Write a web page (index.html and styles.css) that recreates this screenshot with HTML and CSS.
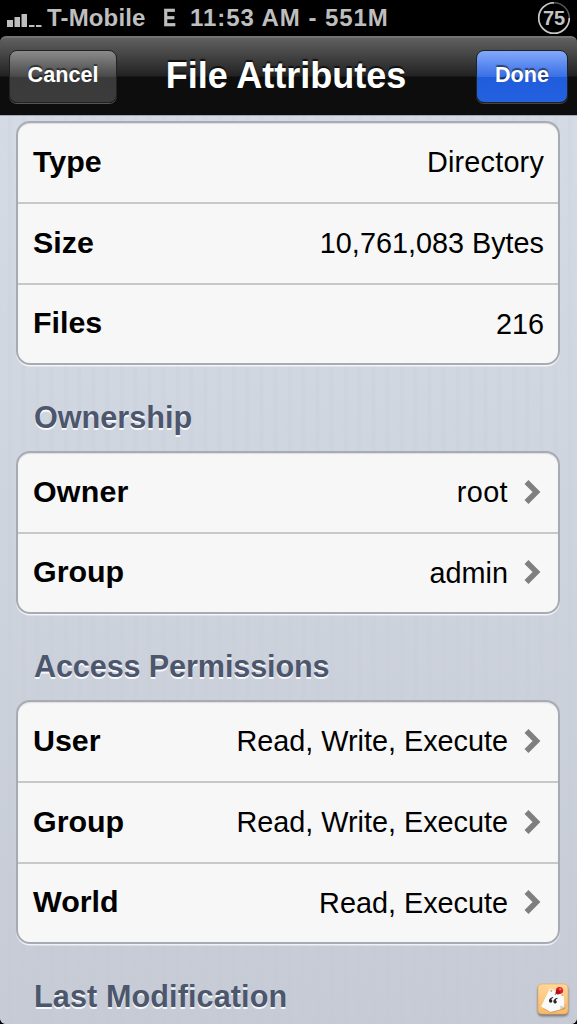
FILE: index.html
```
<!DOCTYPE html>
<html lang="en">
<head>
<meta charset="utf-8">
<title>File Attributes</title>
<link rel="stylesheet" href="styles.css">
</head>
<body>
<div class="screen">
  <div class="status">
    <svg class="signal" width="36" height="13" viewBox="0 0 36 13"><path fill="#bebebe" d="M0 6h6v7H0zM7.500 3h5.500v10H7.500zM14.500 0h5.500v13h-5.500zM22 11h5.500v2H22zM29 11h5.500v2H29z"/></svg>
    <span class="carrier">T-Mobile</span>
    <span class="network">E</span>
    <span class="time">11:53 AM - 551M</span>
    <svg class="battery" width="34" height="34" viewBox="0 0 34 34"><circle cx="17" cy="17" r="15.300" fill="none" stroke="#555" stroke-width="1.500"/><path d="M32.300 17A15.300 15.300 0 1 1 17 1.700" fill="none" stroke="#c8c8c8" stroke-width="1.600"/><text class="level" x="17" y="24" text-anchor="middle">75</text></svg>
  </div>
  <header class="navbar">
    <button class="btn cancel">Cancel</button>
    <h1 class="title">File Attributes</h1>
    <button class="btn done">Done</button>
  </header>
  <main class="content">
    <section class="group">
      <div class="row"><span class="label">Type</span><span class="value directory">Directory</span></div>
      <div class="row"><span class="label">Size</span><span class="value">10,761,083 Bytes</span></div>
      <div class="row"><span class="label">Files</span><span class="value">216</span></div>
    </section>
    <h2 class="heading">Ownership</h2>
    <section class="group">
      <div class="row"><span class="label wide">Owner</span><span class="value root">root</span><svg class="chevron" width="17" height="26" viewBox="0 0 17 26"><path d="M2.500 3l10 10-10 10"/></svg></div>
      <div class="row"><span class="label">Group</span><span class="value">admin</span><svg class="chevron" width="17" height="26" viewBox="0 0 17 26"><path d="M2.500 3l10 10-10 10"/></svg></div>
    </section>
    <h2 class="heading access">Access Permissions</h2>
    <section class="group">
      <div class="row"><span class="label">User</span><span class="value">Read, Write, Execute</span><svg class="chevron" width="17" height="26" viewBox="0 0 17 26"><path d="M2.500 3l10 10-10 10"/></svg></div>
      <div class="row"><span class="label">Group</span><span class="value">Read, Write, Execute</span><svg class="chevron" width="17" height="26" viewBox="0 0 17 26"><path d="M2.500 3l10 10-10 10"/></svg></div>
      <div class="row"><span class="label">World</span><span class="value">Read, Execute</span><svg class="chevron" width="17" height="26" viewBox="0 0 17 26"><path d="M2.500 3l10 10-10 10"/></svg></div>
    </section>
    <h2 class="heading last">Last Modification</h2>
  </main>
  <svg class="note" width="36" height="36" viewBox="0 0 36 36">
    <defs><linearGradient id="amber" x2="0" y2="1"><stop stop-color="#ffd79b"/><stop offset="1" stop-color="#f8b968"/></linearGradient></defs>
    <rect x="3" y="3" width="30" height="30" rx="4" fill="url(#amber)" stroke="#e9ac62" stroke-width=".7"/>
    <path d="M8 27.500l8 4.500 14-4 .500-5z" fill="#a97336" opacity=".45"/>
    <path d="M15 7.500L28.500 13 29.500 26 25 28.500 15.500 31 6 25.500z" fill="#fafafa"/>
    <path d="M25 28.500l.500-4 4 1.500z" fill="#d0d0d0"/>
    <circle cx="16.300" cy="9.800" r="1.100" fill="#e3a366"/><circle cx="27.500" cy="14" r="1.100" fill="#e3a366"/>
    <g fill="#252525" transform="rotate(10 18 20)"><path d="M17.500 16q-4 1.500-3.500 4.800.8 2.200 2.800 1 1.500-1.900-.8-3.100.2-1 1.500-1.700zM22 16q-4 1.500-3.500 4.800.8 2.200 2.800 1 1.500-1.900-.8-3.100.2-1 1.500-1.700z"/></g>
    <path d="M20 14l2.500-4" stroke="#777" stroke-width="1"/>
    <circle cx="24.500" cy="9.500" r="3.600" fill="#d91e20"/><circle cx="22.800" cy="11.200" r="2.200" fill="#b90d16"/><circle cx="25.300" cy="8.300" r="1.200" fill="#f46d66"/>
  </svg>
</div>
</body>
</html>
```
FILE: styles.css
```
* { box-sizing: border-box; }
body { margin: 0; background: #000; font-family: "Liberation Sans", Arial, sans-serif; }
.screen { position: relative; width: 577px; height: 1024px; overflow: hidden; }
.status { display: flex; align-items: center; height: 36px; padding: 0 6px 0 7px; color: #bebebe; font-size: 24px; font-weight: bold; white-space: nowrap; }
.signal { margin-top: 4px; }
.carrier { margin-left: 4px; width: 116px; letter-spacing: .15px; }
.network { width: 27px; transform: scaleX(.8); transform-origin: left; -webkit-text-stroke: .5px #bebebe; }
.time { letter-spacing: .95px; }
.battery { margin-left: auto; margin-right: 0; }
.level { font-size: 20px; font-weight: bold; fill: #c4c4c4; }
.navbar { display: flex; align-items: center; justify-content: space-between; height: 79px; padding: 0 9px; border-top: 2px solid #737373; border-radius: 6px 6px 0 0; background: linear-gradient(#606060 0, #222 38px, #0d0d0d 39px, #0d0d0d 100%); }
.title { margin: 0; padding: 0 21px 2px 0; color: #fff; font-size: 36px; line-height: 40px; letter-spacing: 0; text-shadow: 0 -2px 1px #111; white-space: nowrap; }
.btn { height: 53px; margin-bottom: 1px; padding: 0 0 3px; border: 1px solid #222; border-radius: 8px; color: #fff; font: bold 21.600px "Liberation Sans", Arial, sans-serif; text-shadow: 0 -2px 1px rgba(0,0,0,.5); }
.cancel { width: 108px; background: linear-gradient(#8b8b8b, #494949 50%, #3a3a3a 51%, #3c3c3c); box-shadow: 0 1px 0 #555; }
.done { width: 92px; background: linear-gradient(#83a9fb, #3a70e5 50%, #205ddd 51%, #2361df); box-shadow: 0 1px 0 #444; }
.content { height: 909px; padding: 6px 17px 0 16px; border-top: 1px solid #a4a8b0; border-radius: 0 0 6px 6px; background: linear-gradient(rgba(209,215,227,0), rgba(194,199,209,.8)), repeating-linear-gradient(90deg, #d5dbe5 0 7px, #d2d8e3 8px 11px, #d5dbe5 12px 14px); }
.group { border: 2px solid #a7abb4; border-radius: 14px; background: #f7f7f7; box-shadow: 0 1.500px 0 rgba(255,255,255,.75), inset 0 1px 1px #ddd; margin-top: -1px; }
.row { display: flex; align-items: center; height: 81px; padding: 0 14px 0 15px; border-bottom: 2px solid #c8c8c8; color: #000; }
.row:last-child { height: 78px; border-bottom: 0; }
.label { flex: 1; padding-bottom: 3px; font-size: 30.400px; font-weight: bold; }
.wide { letter-spacing: .2px; }
.value { font-size: 28.800px; }
.directory { letter-spacing: .2px; }
.root { letter-spacing: .4px; }
.chevron { margin: 0 3px 2px 16px; }
.chevron path { fill: none; stroke: #7f7f7f; stroke-width: 5.500; }
.heading { height: 87px; margin: 0; padding: 35px 18px 0; color: #4c566c; font-size: 30.600px; line-height: 35px; text-shadow: 0 2px 0 rgba(255,255,255,.9); }
.access { letter-spacing: -.12px; }
.last { letter-spacing: .1px; }
.note { position: absolute; right: 6px; bottom: 7px; filter: drop-shadow(0 2px 1px rgba(60,60,60,.6)); }
```
